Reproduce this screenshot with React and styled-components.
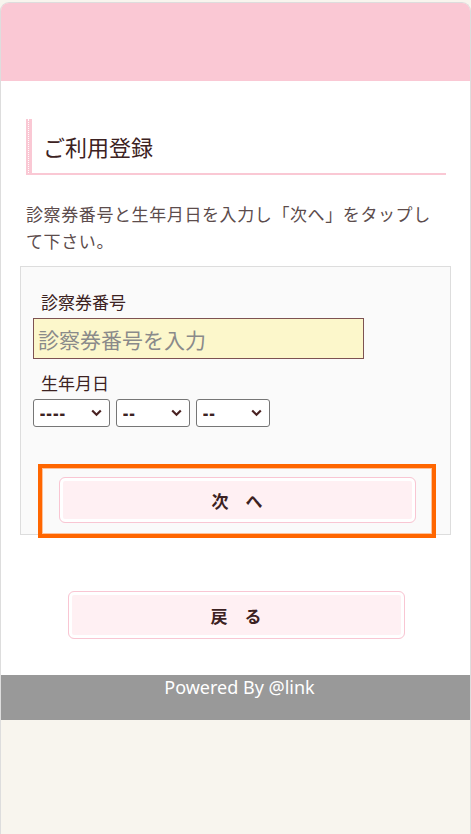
import React from 'react';
import styled, { createGlobalStyle } from 'styled-components';

const GlobalStyle = createGlobalStyle`
  html, body {
    margin: 0;
    padding: 0;
    background: #f8f5ee;
  }
  body {
    font-family: "Noto Sans CJK JP", "Noto Sans", sans-serif;
    color: #3c2222;
  }
`;

const Page = styled.div`
  box-sizing: border-box;
  width: 471px;
  min-height: 832px;
  margin-top: 2px;
  border: 1px solid #dddddd;
  border-bottom: none;
  border-radius: 9px 9px 0 0;
  background: #f8f5ee;
  display: flex;
  flex-direction: column;
`;

const Header = styled.header`
  height: 78px;
  background: #fac8d4;
  border-radius: 8px 8px 0 0;
`;

const Main = styled.main`
  background: #ffffff;
  padding: 38px 24px 36px 25px;
`;

const Heading = styled.h1`
  position: relative;
  margin: 0;
  padding: 12px 0 12px 11px;
  border-left: 6px solid #fac8d4;
  border-bottom: 2px solid #fac8d4;
  font-size: 22px;
  font-weight: normal;
  line-height: 30px;
  color: #3c2222;

  &::before {
    content: '';
    position: absolute;
    left: -4px;
    top: 0;
    bottom: 0;
    border-left: 1px dotted #ffffff;
  }
`;

const Lead = styled.p`
  margin: 25px 0 12px;
  font-size: 17px;
  line-height: 27px;
  letter-spacing: 0.6px;
  color: #5c4c4c;
`;

const FormPanel = styled.section`
  margin: 0 -5px 0 -6px;
  padding: 22px 0 0 12px;
  background: #fafafa;
  border: 1px solid #dddddd;
  display: flex;
  flex-direction: column;
`;

const Label = styled.label`
  padding-left: 8px;
  font-size: 17px;
  line-height: 26px;
  color: #3c2222;
`;

const NumberInput = styled.input`
  box-sizing: border-box;
  width: 331px;
  height: 41px;
  margin: 3px 0 11px;
  padding: 0 4px;
  background: #fcf7cb;
  border: 1px solid #7d5252;
  border-radius: 0;
  font-family: inherit;
  font-size: 21px;
  color: #3c2222;
  outline: none;

  &::placeholder {
    color: #8a8a8a;
  }
`;

const DateRow = styled.div`
  display: flex;
  gap: 6px;
  margin-top: 3px;
`;

const SelectBox = styled.span`
  position: relative;
  display: inline-flex;
  width: ${(p) => p.$w}px;
  height: 28px;
`;

const DateSelect = styled.select`
  appearance: none;
  box-sizing: border-box;
  width: 100%;
  height: 100%;
  padding: 0 20px 0 6px;
  border: 1px solid #767676;
  border-radius: 3px;
  background: #ffffff;
  font-family: "Noto Sans", sans-serif;
  font-size: 16px;
  font-weight: 900;
  letter-spacing: 1.5px;
  color: #3c2222;
`;

const Chevron = styled.svg`
  position: absolute;
  right: 8px;
  top: 10px;
  pointer-events: none;
`;

const NextWrap = styled.div`
  margin: 41px 18px 0 9px;
  padding: 8px 15px 10px;
  border: 1px solid #fcc29c;
  outline: 4px solid #ff6600;
`;

const PinkButton = styled.button`
  box-sizing: border-box;
  display: block;
  width: ${(p) => p.$w}px;
  height: ${(p) => p.$h}px;
  margin: 0 auto;
  border: 1px solid #f9c6d3;
  border-radius: 6px;
  background: #fff0f3;
  box-shadow: inset 0 0 0 3px #ffffff;
  font-family: inherit;
  font-size: 17px;
  font-weight: bold;
  color: #3c2222;
  cursor: pointer;
`;

const BackArea = styled.div`
  padding-top: 56px;
`;

const Footer = styled.footer`
  height: 45px;
  background: #999999;
  color: #ffffff;
  text-align: center;
  font-family: "Noto Sans", sans-serif;
  font-size: 18px;
  line-height: 24px;
  padding-left: 8px;
`;

const DateField = ({ width, blank }) => (
  <SelectBox $w={width}>
    <DateSelect defaultValue="">
      <option value="">{blank}</option>
    </DateSelect>
    <Chevron width="11" height="8" viewBox="0 0 11 8">
      <path d="M1.2 1.5 L5.5 5.8 L9.8 1.5" fill="none" stroke="#4a2222" strokeWidth="2.2" />
    </Chevron>
  </SelectBox>
);

export default function App() {
  return (
    <>
      <GlobalStyle />
      <Page>
        <Header />
        <Main>
          <Heading>ご利用登録</Heading>
          <Lead>診察券番号と生年月日を入力し「次へ」をタップして下さい。</Lead>
          <FormPanel>
            <Label htmlFor="card">診察券番号</Label>
            <NumberInput id="card" type="text" placeholder="診察券番号を入力" />
            <Label>生年月日</Label>
            <DateRow>
              <DateField width={77} blank="----" />
              <DateField width={74} blank="--" />
              <DateField width={74} blank="--" />
            </DateRow>
            <NextWrap>
              <PinkButton $w={357} $h={46}>次　へ</PinkButton>
            </NextWrap>
          </FormPanel>
          <BackArea>
            <PinkButton $w={337} $h={48}>戻　る</PinkButton>
          </BackArea>
        </Main>
        <Footer>Powered By @link</Footer>
      </Page>
    </>
  );
}
